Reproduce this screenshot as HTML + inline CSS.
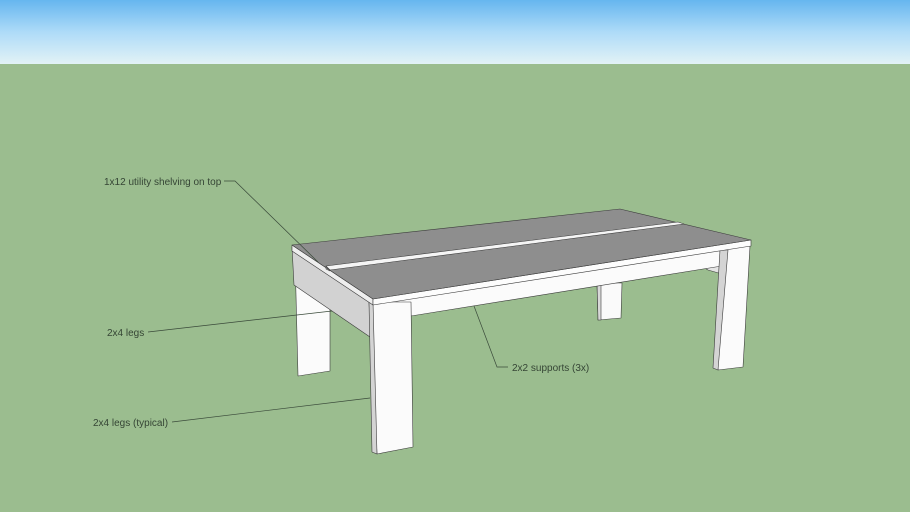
<!DOCTYPE html>
<html><head><meta charset="utf-8"><style>
html,body{margin:0;padding:0;width:910px;height:512px;overflow:hidden;background:#9bbd8f}
svg{display:block}
text{font-family:"Liberation Sans",sans-serif;font-size:10px;fill:#354535}
</style></head><body>
<svg width="910" height="512" viewBox="0 0 910 512">
<defs><linearGradient id="sky" x1="0" y1="0" x2="0" y2="1">
<stop offset="0" stop-color="#66b6ef"/><stop offset="0.5" stop-color="#aedbf8"/><stop offset="1" stop-color="#e2f2f6"/></linearGradient></defs>
<rect x="0" y="0" width="910" height="64" fill="url(#sky)"/>
<rect x="0" y="64" width="910" height="448" fill="#9bbd8f"/>
<g stroke="#3c3c3c" stroke-width="0.6" stroke-linejoin="round">
<polygon points="597,283 622,283 621,318 598,320" fill="#fafafa"/>
<polygon points="597,283 601,283 601,320 598,320" fill="#d8d8d8"/>
<polygon points="700,265 722,262 722,274 708,270" fill="#e4e4e4"/>
<polygon points="295,255 330,270 330,371 298,376" fill="#fbfbfb"/>
<polygon points="292,247 372,300 370,337 294,285" fill="#d2d2d2"/>
<polygon points="373,302 728,248 728,265 411,316 373,316" fill="#fbfbfb"/>
<polygon points="720,250 750,246 743,367 718,370" fill="#fbfbfb"/>
<polygon points="720,250 728,250 718,370 713,368" fill="#d4d4d4"/>
<polygon points="369,302 411,302 413,447 377,454" fill="#fbfbfb"/>
<polygon points="369,302 373,302 377,454 372,452" fill="#d4d4d4"/>
<polygon points="292,245 373,299 373,305 292,251" fill="#eeeeee"/>
<polygon points="373,299 751,240 751,246 373,305" fill="#fdfdfd"/>
<polygon points="292,245 620,209 751,240 373,299" fill="#8e8e8e"/>
<polygon points="326,266 678,222 684,224 330,270" fill="#f5f5f5"/>
<polyline points="326,266 326,269 330,271" fill="none"/>
</g>
<g stroke="#3a4a3a" stroke-width="0.7" fill="none">
<polyline points="224,181 235,181 318,262"/>
<line x1="148" y1="332" x2="332" y2="311"/>
<polyline points="508,367 497,367 474,306"/>
<line x1="172" y1="422" x2="370" y2="398"/>
</g>
<text x="104" y="185">1x12 utility shelving on top</text>
<text x="107" y="336">2x4 legs</text>
<text x="512" y="371">2x2 supports (3x)</text>
<text x="93" y="426">2x4 legs (typical)</text>
</svg>
</body></html>
